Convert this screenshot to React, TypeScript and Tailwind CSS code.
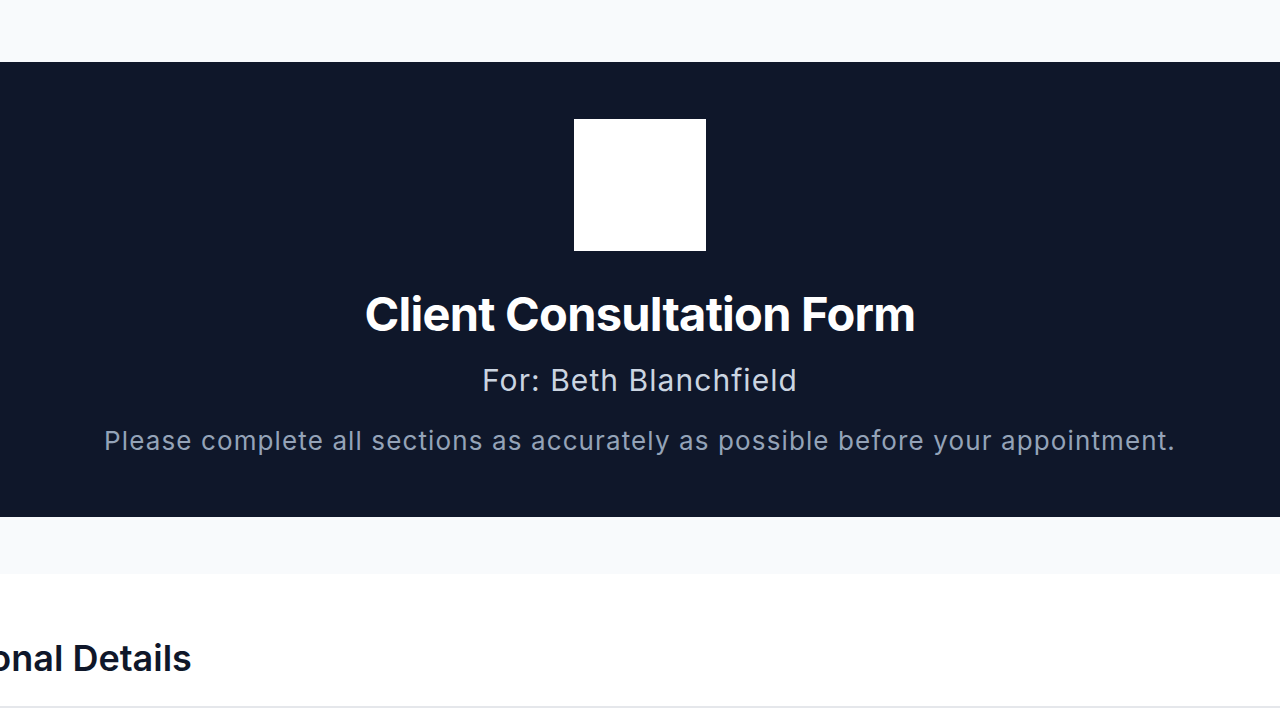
export default function App() {
  return (
    <div className="min-h-screen bg-[#f8fafc] pt-[62px] font-['Inter',sans-serif] overflow-hidden">
      <header className="bg-[#0f172a] flex flex-col items-center pt-[57px] pb-[59px] h-[455px]">
        <div className="w-[132px] h-[132px] bg-white" />
        <h1 className="mt-[35px] text-[47px] leading-[56px] font-bold text-white tracking-[-0.016em]">
          Client Consultation Form
        </h1>
        <p className="mt-[20px] text-[30px] leading-[36px] text-[#cbd5e1] tracking-[0.035em]">For: Beth Blanchfield</p>
        <p className="mt-[26px] text-[26px] leading-[34px] text-[#94a3b8] tracking-[0.043em] whitespace-nowrap">
          Please complete all sections as accurately as possible before your appointment.
        </p>
      </header>
      <div className="h-[57px]" />
      <section className="bg-white">
        <div className="pt-[60px] pb-[24px] border-b-2 border-[#e5e7eb]">
          <h2 className="ml-[-89px] text-[36px] leading-[48px] font-semibold text-[#0f172a] whitespace-nowrap">
            Personal Details
          </h2>
        </div>
        <div className="h-[200px]" />
      </section>
    </div>
  );
}
